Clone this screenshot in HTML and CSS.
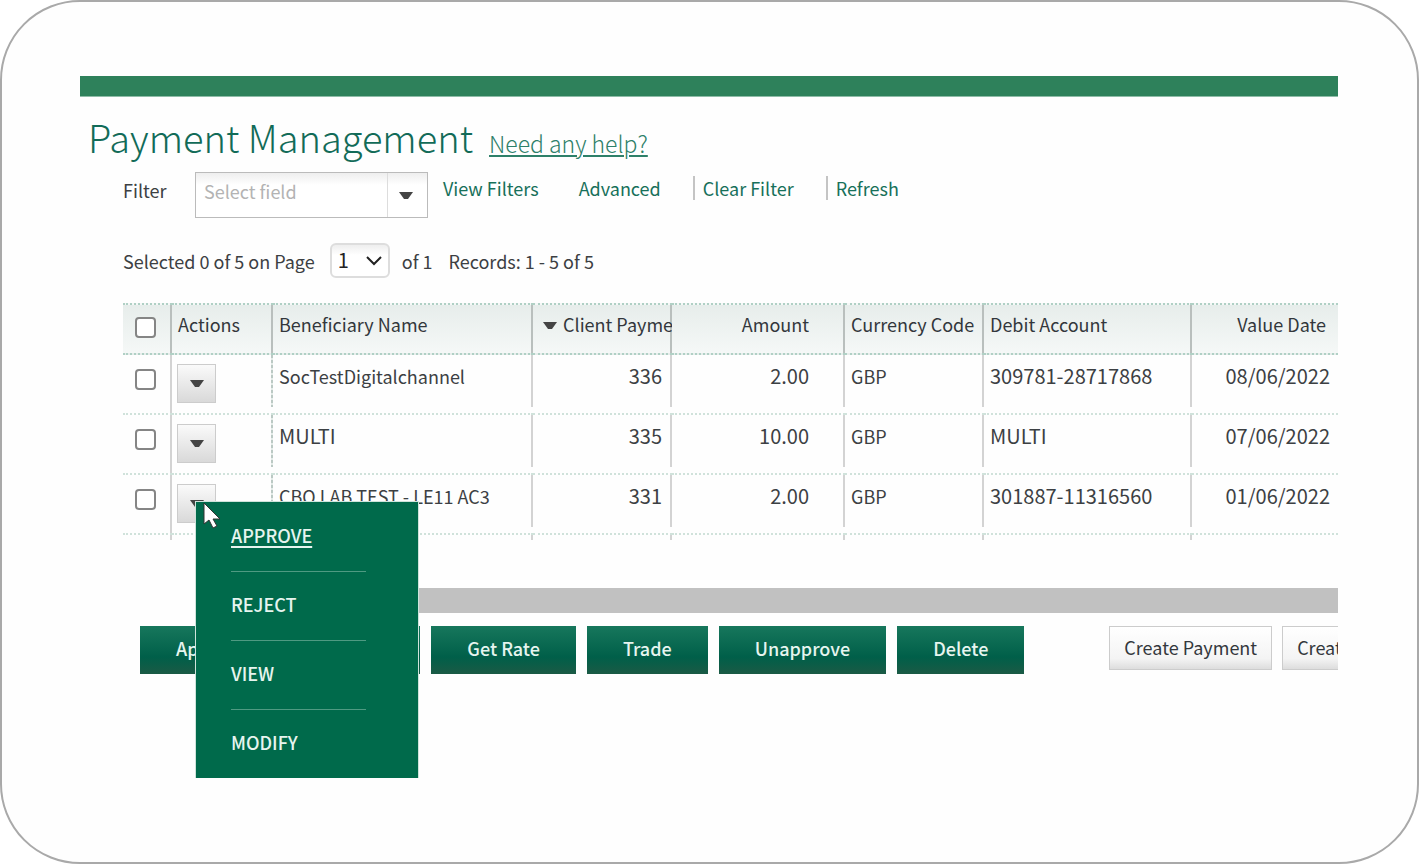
FILE: index.html
```html
<!doctype html>
<html lang="en">
<head>
    <meta charset="UTF-8">
    <meta name="viewport" content="width=device-width,initial-scale=1"/>
    <title>Payment Management</title>
    <link rel="stylesheet" href="styles.css">
</head>
<body>
<div class="frame">
    <div class="screen">
        <div class="topbar"></div>
        <header class="heading">
            <h1>Payment Management</h1>
            <a class="help" href="#">Need any help?</a>
        </header>

        <section class="filter">
            <label class="filter-label" for="field">Filter</label>
            <div class="combo">
                <input type="text" id="field" placeholder="Select field">
                <button type="button" aria-label="Open field list">
                    <svg width="14" height="8" viewBox="0 0 14 8"><path d="M0 0h14L9 7H5z"/></svg>
                </button>
            </div>
            <nav class="filter-links">
                <a href="#">View Filters</a>
                <a href="#">Advanced</a>
                <a class="split" href="#">Clear Filter</a>
                <a class="split" href="#">Refresh</a>
            </nav>
        </section>

        <section class="paging">
            <label for="page">Selected 0 of 5 on Page</label>
            <div class="page-select">
                <select id="page">
                    <option>1</option>
                </select>
                <svg width="16" height="10" viewBox="0 0 16 10"><path d="M1 1l7 7 7-7"/></svg>
            </div>
            <span>of 1</span>
            <span class="records">Records: 1 - 5 of 5</span>
        </section>

        <table class="grid">
            <colgroup>
                <col class="c-check">
                <col class="c-actions">
                <col class="c-name">
                <col class="c-client">
                <col class="c-amount">
                <col class="c-currency">
                <col class="c-account">
                <col>
            </colgroup>
            <thead>
            <tr>
                <th class="check"><input type="checkbox" aria-label="Select all"></th>
                <th>Actions</th>
                <th>Beneficiary Name</th>
                <th class="sorted">
                    <svg width="14" height="8" viewBox="0 0 14 8"><path d="M0 0h14L9 7H5z"/></svg>
                    Client Payment
                </th>
                <th class="num amount">Amount</th>
                <th>Currency Code</th>
                <th>Debit Account</th>
                <th class="num date">Value Date</th>
            </tr>
            </thead>
            <tbody>
            <tr>
                <td class="check"><input type="checkbox" aria-label="Select 336"></td>
                <td class="actions">
                    <button type="button" aria-label="Actions"><svg width="14" height="8" viewBox="0 0 14 8"><path d="M0 0h14L9 7H5z"/></svg></button>
                </td>
                <td>SocTestDigitalchannel</td>
                <td class="num">336</td>
                <td class="num amount">2.00</td>
                <td>GBP</td>
                <td class="account">309781-28717868</td>
                <td class="num">08/06/2022</td>
            </tr>
            <tr>
                <td class="check"><input type="checkbox" aria-label="Select 335"></td>
                <td class="actions">
                    <button type="button" aria-label="Actions"><svg width="14" height="8" viewBox="0 0 14 8"><path d="M0 0h14L9 7H5z"/></svg></button>
                </td>
                <td class="account">MULTI</td>
                <td class="num">335</td>
                <td class="num amount">10.00</td>
                <td>GBP</td>
                <td class="account">MULTI</td>
                <td class="num">07/06/2022</td>
            </tr>
            <tr>
                <td class="check"><input type="checkbox" aria-label="Select 331"></td>
                <td class="actions">
                    <button type="button" aria-label="Actions"><svg width="14" height="8" viewBox="0 0 14 8"><path d="M0 0h14L9 7H5z"/></svg></button>
                    <ul class="menu">
                        <li><a class="active" href="#">APPROVE</a></li>
                        <li><a href="#">REJECT</a></li>
                        <li><a href="#">VIEW</a></li>
                        <li><a href="#">MODIFY</a></li>
                    </ul>
                    <svg class="pointer" width="18" height="27" viewBox="0 0 18 27"><path d="M1 1v21l5-4 4 8 4-2-4-7h7z"/></svg>
                </td>
                <td>CBO LAB TEST - LE11 AC3</td>
                <td class="num">331</td>
                <td class="num amount">2.00</td>
                <td>GBP</td>
                <td class="account">301887-11316560</td>
                <td class="num">01/06/2022</td>
            </tr>
            </tbody>
            <tfoot>
            <tr>
                <td></td><td></td><td></td><td></td><td></td><td></td><td></td><td></td>
            </tr>
            </tfoot>
        </table>

        <div class="scrollbar"></div>

        <footer class="buttons">
            <button type="button" class="btn">Approve</button>
            <button type="button" class="btn">Reject</button>
            <button type="button" class="btn">Get Rate</button>
            <button type="button" class="btn">Trade</button>
            <button type="button" class="btn">Unapprove</button>
            <button type="button" class="btn">Delete</button>
            <div class="create">
                <button type="button" class="btn-light">Create Payment</button>
                <button type="button" class="btn-light">Create Template</button>
            </div>
        </footer>
    </div>
</div>
</body>
</html>
```

FILE: styles.css
```css
* {
    box-sizing: border-box;
    padding: 0;
    margin: 0;
}

body {
    background: #fff;
    color: #3c4043;
    font: 18px/24px "Noto Sans CJK SC", "Open Sans", sans-serif;
}

button, input, select {
    font: inherit;
    color: inherit;
}

a {
    color: #17705a;
    text-decoration: none;
}

.frame {
    display: flex;
    min-height: 100vh;
    margin-right: 1px;
    padding: 74px 79px 84px 78px;
    border: 2px solid #a9a9a9;
    border-radius: 80px;
    background: #fefefe;
}

.screen {
    flex: 1;
    min-width: 0;
    overflow: hidden;
}

.topbar {
    height: 21px;
    background: #2e815b;
    border-bottom: 1px solid #8fbca8;
}

/* title */
.heading {
    display: flex;
    align-items: baseline;
    gap: 16px;
    height: 75px;
    padding: 14px 0 0 8px;
    white-space: nowrap;
}

.heading h1 {
    font-size: 38px;
    line-height: 52px;
    font-weight: 300;
    color: #126b58;
}

.help {
    font-size: 23px;
    font-weight: 300;
    text-decoration: underline;
    text-decoration-thickness: 2px;
    text-underline-offset: 2px;
    color: #2e8069;
}

/* filter */
.filter {
    display: flex;
    align-items: flex-start;
    padding-left: 43px;
    white-space: nowrap;
}

.filter-label {
    width: 72px;
    padding-top: 6px;
}

.combo {
    display: flex;
    width: 233px;
    height: 46px;
    border: 1px solid #bbb;
    background: linear-gradient(#eee, #fff 12px);
}

.combo input {
    flex: 1;
    min-width: 0;
    padding: 0 0 8px 8px;
    border: 0;
    background: none;
}

.combo input::placeholder {
    color: #b3b3b3;
}

.combo button {
    width: 40px;
    padding: 2px 4px 0 0;
    border: 0;
    border-left: 1px solid #ddd;
    background: none;
}

svg {
    fill: #444;
}

.combo svg, .actions button svg {
    display: block;
    margin: 0 auto;
}

.filter-links {
    display: flex;
    gap: 32px;
    padding: 4px 0 0 15px;
}

.filter-links a:first-child {
    margin-right: 8px;
}

.filter-links .split {
    padding-left: 8px;
    border-left: 2px solid #c4c4c4;
}

/* paging */
.paging {
    display: flex;
    align-items: center;
    gap: 12px;
    padding: 25px 0 25px 43px;
    white-space: nowrap;
}

.paging label {
    margin-right: 3px;
}

.page-select {
    position: relative;
    width: 60px;
    height: 35px;
}

.page-select select {
    width: 100%;
    height: 100%;
    padding: 0 6px 2px;
    appearance: none;
    border: 2px solid #ddd;
    border-radius: 6px;
    background: linear-gradient(#eee, #fff 10px);
    font-size: 20px;
    color: #222;
}

.page-select svg {
    position: absolute;
    right: 8px;
    top: 13px;
    fill: none;
    stroke: #222;
    stroke-width: 2;
    pointer-events: none;
}

.records {
    margin-left: 4px;
}

/* grid */
.grid {
    width: calc(100% - 43px);
    margin-left: 43px;
    table-layout: fixed;
    border-collapse: separate;
    border-spacing: 0;
    white-space: nowrap;
}

.c-check { width: 49px; }
.c-actions { width: 101px; }
.c-name { width: 260px; }
.c-client { width: 139px; }
.c-amount { width: 173px; }
.c-currency { width: 139px; }
.c-account { width: 208px; }

.grid th {
    height: 52px;
    padding: 7px 6px 0;
    border: 0 dotted #b0d0c5;
    border-width: 2px 0;
    background: linear-gradient(#b9bfbd, #b9bfbd) right / 2px 100% no-repeat, linear-gradient(#e7edeb, #f5f8f7);
    font-weight: 400;
    text-align: left;
    vertical-align: top;
    color: #33373c;
}

.grid td {
    height: 60px;
    padding: 9px 6px 0;
    border-bottom: 2px dotted #d0e2db;
    background: linear-gradient(#d3d3d3, #d3d3d3) right top / 2px 52px no-repeat;
    vertical-align: top;
}

.grid th:last-child, .grid td:last-child {
    background-size: 0 0, auto;
}

.grid td:first-child {
    background-size: 2px 100%;
}

.grid td:nth-child(2) {
    background-image: repeating-linear-gradient(#bbc9c4 0 3px, #e4ebe8 3px 5px);
}

.grid tfoot td {
    height: 5px;
    padding: 0;
    border: 0;
}

.grid .num {
    padding-right: 10px;
    text-align: right;
}

.grid td.num, .grid .account {
    font-size: 20px;
}

.grid td.num:last-child {
    padding-right: 8px;
}

.grid .date {
    padding-right: 12px;
}

.grid .num.amount {
    padding-right: 36px;
}

.grid .sorted {
    overflow: hidden;
    padding-left: 10px;
}

.sorted svg {
    margin-right: 2px;
    vertical-align: 2px;
}

.check input {
    display: block;
    width: 21px;
    height: 21px;
    margin: 5px 0 0 6px;
    appearance: none;
    border: 2px solid #858585;
    border-radius: 4px;
    background: #fff;
}

.grid .actions {
    position: relative;
    padding: 9px 5px 0;
}

.actions button {
    display: block;
    width: 39px;
    height: 39px;
    border: 1px solid #ccc;
    background: linear-gradient(#fafafa, #d9d9d9);
}

.menu {
    position: absolute;
    top: 26px;
    left: 23px;
    z-index: 1;
    width: 224px;
    height: 300px;
    padding: 1px 0 0 35px;
    border: 1px solid #cfe3db;
    background: #006a4b;
    list-style: none;
}

.menu li {
    width: 135px;
    height: 69px;
    padding-top: 20px;
    border-bottom: 1px solid #4f9a82;
    font-weight: 500;
}

.menu a {
    color: #e6f5ef;
}

.menu .active {
    text-decoration: underline;
    text-decoration-thickness: 2px;
    text-underline-offset: 3px;
}

.pointer {
    position: absolute;
    top: 27px;
    left: 31px;
    z-index: 2;
    fill: #fff;
    stroke: #333;
}

/* bottom */
.scrollbar {
    height: 25px;
    margin: 48px 0 13px 150px;
    background: #c1c1c1;
}

.buttons {
    display: flex;
    gap: 11px;
    padding-left: 60px;
    white-space: nowrap;
}

.buttons button {
    flex: none;
}

.btn {
    height: 48px;
    padding: 0 36px 5px;
    border: 0;
    background: linear-gradient(#17775c, #005f49 65%, #1b5a45);
    font-weight: 500;
    color: #e6f5ef;
}

.create {
    display: flex;
    gap: 10px;
    margin-left: 74px;
}

.btn-light {
    height: 44px;
    padding: 0 14px 2px;
    border: 1px solid #ccc;
    background: linear-gradient(#fff, #f4f4f4 75%, #ddd);
    color: #33373c;
}
```
